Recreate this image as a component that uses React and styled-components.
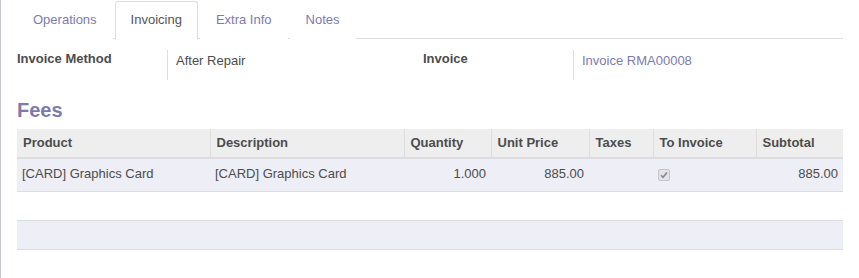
import React from "react";
import styled, { createGlobalStyle } from "styled-components";

const GlobalStyle = createGlobalStyle`
  body {
    margin: 0;
    background: #fff;
    font-family: "Liberation Sans", Arial, sans-serif;
    font-size: 13px;
    color: #4c4c4c;
  }
`;

const Sheet = styled.div`
  height: 278px;
  box-sizing: border-box;
  border-left: 1px solid #c9c7d6;
  padding: 0 16px;
  overflow: hidden;
`;

const TabBar = styled.div`
  display: flex;
  height: 39px;
  padding-top: 1px;
  box-sizing: border-box;
  border-bottom: 1px solid #dddddd;
`;

const Tab = styled.div`
  display: flex;
  align-items: center;
  height: 39px;
  box-sizing: border-box;
  padding: 0 15px 2px;
  margin-right: 2px;
  border: 1px solid ${({ active }) => (active ? "#dddddd" : "transparent")};
  border-bottom-color: ${({ active }) => (active ? "#ffffff" : "transparent")};
  border-radius: 3px 3px 0 0;
  background: #fff;
  color: ${({ active }) => (active ? "#555555" : "#7c7bad")};
  font-size: 13px;
`;

const InfoGrid = styled.div`
  display: grid;
  grid-template-columns: 150px 256px 150px 1fr;
  margin-top: 11px;
  height: 30px;
`;

const Label = styled.div`
  font-weight: bold;
  color: #4c4c4c;
  padding-top: 1px;
`;

const Value = styled.div`
  border-left: 1px solid #dddddd;
  padding: 3px 0 0 8px;
  color: ${({ link }) => (link ? "#7c7bad" : "#4c4c4c")};
`;

const Heading = styled.h2`
  margin: 19px 0 0;
  font-size: 20px;
  font-weight: bold;
  line-height: 22px;
  color: #7c7bad;
`;

const Table = styled.table`
  width: 100%;
  margin-top: 8px;
  border-collapse: collapse;
  table-layout: fixed;
`;

const Th = styled.th`
  height: 26px;
  padding: 0 6px 2px;
  background: #eeeeee;
  border-left: 1px solid #dddddd;
  border-bottom: 2px solid #dddddd;
  text-align: left;
  font-weight: bold;
  color: #4c4c4c;
  &:first-child {
    border-left: none;
  }
`;

const Td = styled.td`
  height: 29px;
  padding: 0 5px 3px;
  background: #eeeef7;
  border-bottom: 1px solid #dddddd;
  text-align: ${({ num }) => (num ? "right" : "left")};
  color: #4c4c4c;
`;

const Spacer = styled.td`
  height: 28px;
  padding: 0;
`;

const FootCell = styled.td`
  height: 28px;
  padding: 0;
  background: #eeeef7;
  border-top: 1px solid #dddddd;
  border-bottom: 1px solid #dddddd;
`;

const CheckBox = styled.span`
  display: inline-flex;
  align-items: center;
  justify-content: center;
  width: 12px;
  height: 12px;
  box-sizing: border-box;
  border: 1px solid #c6c6c6;
  border-radius: 2px;
  background: #e4e4e4;
  vertical-align: middle;
`;

const columns = [
  { title: "Product", width: 193 },
  { title: "Description", width: 194 },
  { title: "Quantity", width: 87 },
  { title: "Unit Price", width: 98 },
  { title: "Taxes", width: 64 },
  { title: "To Invoice", width: 103 },
  { title: "Subtotal", width: 87 },
];

export default function App() {
  return (
    <>
      <GlobalStyle />
      <Sheet>
        <TabBar>
          <Tab>Operations</Tab>
          <Tab active>Invoicing</Tab>
          <Tab>Extra Info</Tab>
          <Tab>Notes</Tab>
        </TabBar>

        <InfoGrid>
          <Label>Invoice Method</Label>
          <Value>After Repair</Value>
          <Label>Invoice</Label>
          <Value link>Invoice RMA00008</Value>
        </InfoGrid>

        <Heading>Fees</Heading>

        <Table>
          <colgroup>
            {columns.map((c) => (
              <col key={c.title} style={{ width: c.width }} />
            ))}
          </colgroup>
          <thead>
            <tr>
              {columns.map((c) => (
                <Th key={c.title}>{c.title}</Th>
              ))}
            </tr>
          </thead>
          <tbody>
            <tr>
              <Td>[CARD] Graphics Card</Td>
              <Td>[CARD] Graphics Card</Td>
              <Td num>1.000</Td>
              <Td num>885.00</Td>
              <Td />
              <Td>
                <CheckBox>
                  <svg width="8" height="8" viewBox="0 0 8 8">
                    <path d="M1 4.3 L3 6.3 L7 1.5" fill="none" stroke="#8d7fa6" strokeWidth="1.6" />
                  </svg>
                </CheckBox>
              </Td>
              <Td num>885.00</Td>
            </tr>
            <tr>
              <Spacer colSpan={7} />
            </tr>
          </tbody>
          <tfoot>
            <tr>
              <FootCell colSpan={7} />
            </tr>
          </tfoot>
        </Table>
      </Sheet>
    </>
  );
}
